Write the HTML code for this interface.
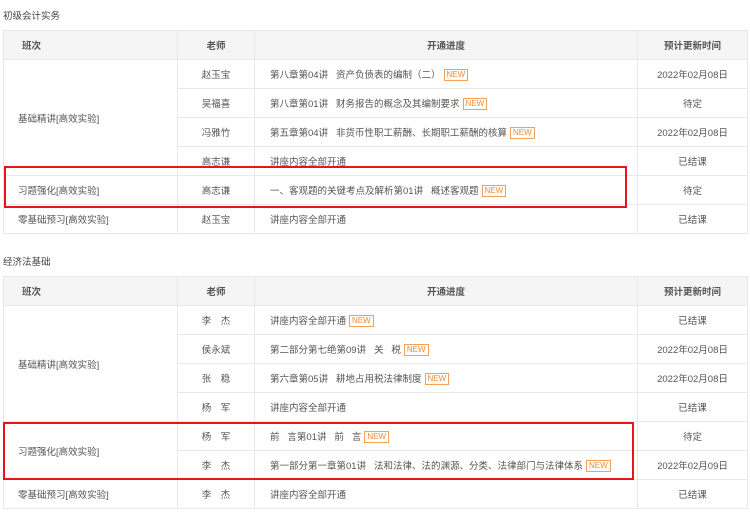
<!DOCTYPE html><html><head><meta charset="utf-8"><style>
body{margin:0;width:750px;height:522px;background:#fff;font-family:"Liberation Sans","Noto Sans CJK SC",sans-serif;font-size:9.5px;color:#555;position:relative;overflow:hidden}
.t{position:absolute;left:3px;font-size:9.5px;color:#444}
table{position:absolute;left:3px;width:744px;border-collapse:collapse;table-layout:fixed}
td,th{border:1px solid #e8e8e8;text-align:center;padding:0;height:28px;font-weight:normal}
th{background:#f5f5f5;font-weight:bold;color:#555}
td.l{text-align:left;padding-left:14px}
td.p{text-align:left;padding-left:15px;white-space:pre}
th.l{text-align:left;padding-left:18px}
.n{display:inline-block;border:1px solid #f5a05a;color:#f08a30;font-size:8px;line-height:10px;padding:0 2px;margin-left:3px;vertical-align:middle}
.r{position:absolute;border:2px solid #e8141b}
</style></head><body>
<div class="t" style="top:8px">初级会计实务</div>
<table style="top:30px">
<colgroup><col style="width:174px"><col style="width:77px"><col style="width:383px"><col style="width:110px"></colgroup>
<tr><th class="l">班次</th><th>老师</th><th>开通进度</th><th>预计更新时间</th></tr>
<tr><td class="l" rowspan="4">基础精讲[高效实验]</td><td>赵玉宝</td><td class="p">第八章第04讲   资产负债表的编制（二）<span class="n">NEW</span></td><td>2022年02月08日</td></tr>
<tr><td>吴福喜</td><td class="p">第八章第01讲   财务报告的概念及其编制要求<span class="n">NEW</span></td><td>待定</td></tr>
<tr><td>冯雅竹</td><td class="p">第五章第04讲   非货币性职工薪酬、长期职工薪酬的核算<span class="n">NEW</span></td><td>2022年02月08日</td></tr>
<tr><td>高志谦</td><td class="p">讲座内容全部开通</td><td>已结课</td></tr>
<tr><td class="l">习题强化[高效实验]</td><td>高志谦</td><td class="p">一、客观题的关键考点及解析第01讲   概述客观题<span class="n">NEW</span></td><td>待定</td></tr>
<tr><td class="l">零基础预习[高效实验]</td><td>赵玉宝</td><td class="p">讲座内容全部开通</td><td>已结课</td></tr>
</table>
<div class="t" style="top:254px">经济法基础</div>
<table style="top:276px">
<colgroup><col style="width:174px"><col style="width:77px"><col style="width:383px"><col style="width:110px"></colgroup>
<tr><th class="l">班次</th><th>老师</th><th>开通进度</th><th>预计更新时间</th></tr>
<tr><td class="l" rowspan="4">基础精讲[高效实验]</td><td>李　杰</td><td class="p">讲座内容全部开通<span class="n">NEW</span></td><td>已结课</td></tr>
<tr><td>侯永斌</td><td class="p">第二部分第七绝第09讲   关   税<span class="n">NEW</span></td><td>2022年02月08日</td></tr>
<tr><td>张　稳</td><td class="p">第六章第05讲   耕地占用税法律制度<span class="n">NEW</span></td><td>2022年02月08日</td></tr>
<tr><td>杨　军</td><td class="p">讲座内容全部开通</td><td>已结课</td></tr>
<tr><td class="l" rowspan="2">习题强化[高效实验]</td><td>杨　军</td><td class="p">前   言第01讲   前   言<span class="n">NEW</span></td><td>待定</td></tr>
<tr><td>李　杰</td><td class="p">第一部分第一章第01讲   法和法律、法的渊源、分类、法律部门与法律体系<span class="n">NEW</span></td><td>2022年02月09日</td></tr>
<tr><td class="l">零基础预习[高效实验]</td><td>李　杰</td><td class="p">讲座内容全部开通</td><td>已结课</td></tr>
</table>
<div class="r" style="left:4px;top:166px;width:619px;height:38px"></div>
<div class="r" style="left:3px;top:422px;width:627px;height:54px"></div>
</body></html>
